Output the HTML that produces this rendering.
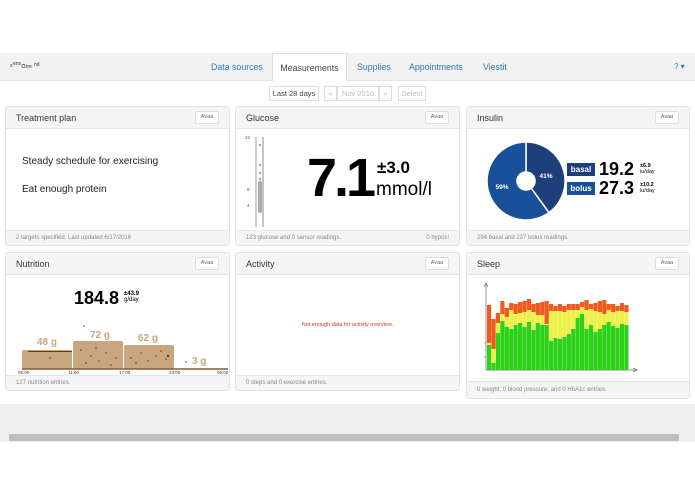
<!DOCTYPE html>
<html><head><meta charset="utf-8"><style>
*{box-sizing:border-box;margin:0;padding:0}
body{width:695px;height:494px;background:#fff;font-family:"Liberation Sans",sans-serif;position:relative;overflow:hidden;color:#333}
.abs{position:absolute}
.nav{left:0;top:53px;width:695px;height:28px;background:#f2f2f2;border-bottom:1px solid #e4e4e4}
.nav a{position:absolute;top:9px;font-size:8.8px;color:#2a7ab8;text-decoration:none}
.tab{left:272px;top:53px;width:75px;height:28px;background:#fff;border:1px solid #e0e0e0;border-bottom:none;font-size:8.8px;color:#444;text-align:center;padding-top:9px}
.btn{top:86px;height:15px;border:1px solid #ddd;font-size:7.5px;color:#bbb;text-align:center;line-height:13px;background:#fff}
.panel{background:#fff;border:1px solid #e3e3e3;border-radius:3px;overflow:hidden}
.ph{position:absolute;left:0;top:0;right:0;height:22px;background:#f5f5f5;border-bottom:1px solid #e6e6e6;font-size:9px;color:#333;padding:6px 0 0 10px}
.avaa{position:absolute;right:10px;top:4px;width:24px;height:13px;border:1px solid #ddd;background:#fff;font-size:5.5px;color:#666;text-align:center;line-height:11px;border-radius:2px}
.pf{position:absolute;left:0;right:0;bottom:0;height:15px;background:#f5f5f5;border-top:1px solid #e6e6e6;font-size:6px;color:#888;padding:4px 0 0 10px}
</style></head><body>
<div class="abs nav">
<svg class="abs" style="left:10px;top:8px" width="36" height="12"><text x="0" y="6" font-size="5" fill="#333">s</text><text x="3" y="4" font-size="5" fill="#333">ens</text><circle cx="13.5" cy="5" r="1.6" fill="none" stroke="#333" stroke-width=".6"/><text x="16" y="7" font-size="5" fill="#333">tre</text><text x="24" y="5" font-size="5" fill="#333">nd</text></svg>
<a style="left:211px">Data sources</a>
<a style="left:357px">Supplies</a>
<a style="left:409px">Appointments</a>
<a style="left:483px">Viestit</a>
<a style="left:674px;font-size:8px">? ▾</a>
</div>
<div class="abs tab">Measurements</div>
<div class="abs btn" style="left:269px;width:50px;color:#444">Last 28 days</div>
<div class="abs btn" style="left:324px;width:13px">«</div>
<div class="abs btn" style="left:337px;width:42px">Nov 2016</div>
<div class="abs btn" style="left:379px;width:13px">»</div>
<div class="abs btn" style="left:398px;width:28px">Select</div>

<!-- Treatment -->
<div class="abs panel" style="left:5px;top:106px;width:225px;height:140px">
<div class="ph">Treatment plan<div class="avaa">Avaa</div></div>
<div class="abs" style="left:16px;top:49px;font-size:10px;color:#222">Steady schedule for exercising</div>
<div class="abs" style="left:16px;top:77px;font-size:10px;color:#222">Eat enough protein</div>
<div class="pf">2 targets specified. Last updated 6/17/2016</div>
</div>

<!-- Glucose -->
<div class="abs panel" style="left:235px;top:106px;width:225px;height:140px">
<div class="ph">Glucose<div class="avaa">Avaa</div></div>
<svg class="abs" style="left:8px;top:26px" width="30" height="96">
<line x1="12" y1="4" x2="12" y2="94" stroke="#999" stroke-width="1"/>
<line x1="19" y1="4" x2="19" y2="94" stroke="#888" stroke-width="1"/>
<text x="1" y="6" font-size="4.5" fill="#555">22</text>
<text x="3" y="58" font-size="4.5" fill="#555">8</text>
<text x="3" y="74" font-size="4.5" fill="#555">4</text>
<g fill="#555" fill-opacity="0.5">
<circle cx="16" cy="12" r="1.3"/><circle cx="16" cy="32" r="1.3"/><circle cx="16" cy="40" r="1.3"/><circle cx="16" cy="46" r="1.3"/>
<rect x="14" y="48" width="4" height="32" rx="2"/></g>
</svg>
<div class="abs" style="left:71px;top:44px;font-size:54px;font-weight:bold;color:#000;letter-spacing:-3px;line-height:54px">7.1</div>
<div class="abs" style="left:141px;top:51px;font-size:17px;font-weight:bold;color:#000">±3.0</div>
<div class="abs" style="left:140px;top:72px;font-size:19px;color:#000">mmol/l</div>
<div class="pf">123 glucose and 0 sensor readings.<span style="position:absolute;right:10px">0 hypos!</span></div>
</div>

<!-- Insulin -->
<div class="abs panel" style="left:466px;top:106px;width:224px;height:140px">
<div class="ph">Insulin<div class="avaa">Avaa</div></div>
<svg class="abs" style="left:18px;top:33px" width="82" height="82" viewBox="-41 -41 82 82">
<path d="M0,-39 A39,39 0 0 1 22.9,31.6 L5.3,7.3 A9,9 0 0 0 0,-9 Z" fill="#1f3f7a" stroke="#fff" stroke-width="1.5"/>
<path d="M22.9,31.6 A39,39 0 1 1 0,-39 L0,-9 A9,9 0 1 0 5.3,7.3 Z" fill="#18509a" stroke="#fff" stroke-width="1.5"/>
<text x="20" y="-3" font-size="6.5" fill="#fff" font-weight="bold" text-anchor="middle">41%</text>
<text x="-24" y="8" font-size="6.5" fill="#fff" font-weight="bold" text-anchor="middle">59%</text>
</svg>
<div class="abs" style="left:100px;top:56px;width:28px;height:13px;background:#1f3f7a;color:#fff;font-size:8px;font-weight:bold;text-align:center;line-height:13px">basal</div>
<div class="abs" style="left:100px;top:75px;width:28px;height:13px;background:#18509a;color:#fff;font-size:8px;font-weight:bold;text-align:center;line-height:13px">bolus</div>
<div class="abs" style="left:132px;top:52px;font-size:18px;font-weight:bold;color:#000">19.2</div>
<div class="abs" style="left:132px;top:71px;font-size:18px;font-weight:bold;color:#000">27.3</div>
<div class="abs" style="left:173px;top:56px;font-size:5.5px;color:#000;line-height:6px"><b>±6.9</b><br>iu/day</div>
<div class="abs" style="left:173px;top:75px;font-size:5.5px;color:#000;line-height:6px"><b>±10.2</b><br>iu/day</div>
<div class="pf">294 basal and 227 bolus readings.</div>
</div>

<!-- Nutrition -->
<div class="abs panel" style="left:5px;top:252px;width:225px;height:139px">
<div class="ph">Nutrition<div class="avaa">Avaa</div></div>
<div class="abs" style="left:68px;top:35px;font-size:18px;font-weight:bold;color:#000">184.8</div>
<div class="abs" style="left:118px;top:38px;font-size:6px;color:#000;line-height:6px"><b>±43.9</b><br>g/day</div>
<svg class="abs" style="left:0;top:70px" width="225" height="52">
<rect x="16" y="27" width="50" height="19" rx="2" fill="#c8a57e"/>
<rect x="67" y="18" width="50" height="28" rx="2" fill="#c8a57e"/>
<rect x="118" y="22" width="50" height="24" rx="2" fill="#c8a57e"/>
<line x1="16" y1="46" x2="222" y2="46" stroke="#8a5a30" stroke-width="1.5"/>
<text x="31" y="22" font-size="10" fill="#c8a57e" font-weight="bold">48 g</text>
<text x="84" y="15" font-size="10" fill="#c8a57e" font-weight="bold">72 g</text>
<text x="132" y="18" font-size="10" fill="#c8a57e" font-weight="bold">62 g</text>
<text x="186" y="41" font-size="10" fill="#c8a57e" font-weight="bold">3 g</text>
<g fill="#6a3a10">
<rect x="22" y="28" width="44" height="1"/><circle cx="75" cy="27" r=".8"/><circle cx="85" cy="33" r=".8"/><circle cx="93" cy="38" r=".8"/><circle cx="100" cy="30" r=".8"/><circle cx="110" cy="35" r=".8"/><circle cx="80" cy="40" r=".8"/><circle cx="125" cy="35" r=".8"/><circle cx="135" cy="30" r=".8"/><circle cx="142" cy="38" r=".8"/><circle cx="150" cy="33" r=".8"/><circle cx="160" cy="36" r=".8"/><circle cx="78" cy="3" r=".8"/><circle cx="180" cy="39" r=".8"/><circle cx="44" cy="35" r=".8"/><circle cx="105" cy="42" r=".8"/><circle cx="130" cy="40" r=".8"/><circle cx="90" cy="25" r=".8"/><circle cx="155" cy="28" r=".8"/><circle cx="162" cy="33" r="1.2"/>
</g>
<text x="12" y="51" font-size="4.5" fill="#333">05:00</text>
<text x="62" y="51" font-size="4.5" fill="#333">11:00</text>
<text x="113" y="51" font-size="4.5" fill="#333">17:00</text>
<text x="163" y="51" font-size="4.5" fill="#333">23:00</text>
<text x="211" y="51" font-size="4.5" fill="#333">05:00</text>
</svg>
<div class="pf">127 nutrition entries.</div>
</div>

<!-- Activity -->
<div class="abs panel" style="left:235px;top:252px;width:225px;height:139px">
<div class="ph">Activity<div class="avaa">Avaa</div></div>
<div class="abs" style="left:0;right:0;top:69px;text-align:center;font-size:5.5px;color:#e03020">Not enough data for activity overview.</div>
<div class="pf">0 steps and 0 exercise entries.</div>
</div>

<!-- Sleep -->
<div class="abs panel" style="left:466px;top:252px;width:224px;height:147px">
<div class="ph">Sleep<div class="avaa">Avaa</div></div>
<svg id="sl" class="abs" style="left:0;top:0" width="224" height="125"></svg>
<div class="pf" style="height:17px;padding-top:5px">0 weight, 0 blood pressure, and 0 HbA1c entries.</div>
</div>

<div class="abs" style="left:0;top:404px;width:695px;height:38px;background:#efefef"></div>
<div class="abs" style="left:9px;top:434px;width:670px;height:7px;background:#bfbfbf"></div>
<script>
var s=document.getElementById('sl'),h='';
var d=[[304,342,344],[318,348,362],[312,322,332],[300,313,320],[307,316,326],[302,309,328],[303,313,324],[301,312,322],[300,311,326],[298,309,321],[303,311,329],[302,314,322],[301,314,324],[300,323,324],[303,310,340],[305,310,337],[303,310,338],[305,311,336],[303,309,333],[303,309,328],[303,309,317],[301,306,313],[299,309,328],[303,308,324],[302,310,331],[300,311,328],[299,313,324],[303,309,321],[303,311,325],[305,310,327],[302,310,323],[304,311,324]];
var P=252,B=117;
h+='<line x1="19" y1="'+(283-P)+'" x2="19" y2="'+B+'" stroke="#666" stroke-width=".7"/><path d="M17,'+(286-P)+' L19,'+(282-P)+' L21,'+(286-P)+'" fill="none" stroke="#666" stroke-width=".7"/>';
h+='<line x1="19" y1="'+B+'" x2="170" y2="'+B+'" stroke="#666" stroke-width=".7"/><path d="M166,'+(B-2)+' L170,'+B+' L166,'+(B+2)+'" fill="none" stroke="#666" stroke-width=".7"/>';
h+='<line x1="17" y1="'+(342-P)+'" x2="19" y2="'+(342-P)+'" stroke="#666" stroke-width=".5"/><line x1="17" y1="'+(356-P)+'" x2="19" y2="'+(356-P)+'" stroke="#666" stroke-width=".5"/>';
for(var i=0;i<32;i++){var x=20+i*4.43,w=4.2;var t=d[i][0]-P,y=d[i][1]-P,g=d[i][2]-P;
h+='<rect x="'+x+'" y="'+t+'" width="'+w+'" height="'+(y-t)+'" fill="#f05a1e"/>';
h+='<rect x="'+x+'" y="'+y+'" width="'+w+'" height="'+(g-y)+'" fill="#eef04a"/>';
h+='<rect x="'+x+'" y="'+g+'" width="'+w+'" height="'+(B-g)+'" fill="#2ed11a"/>';}
s.innerHTML=h;
</script>
</body></html>
